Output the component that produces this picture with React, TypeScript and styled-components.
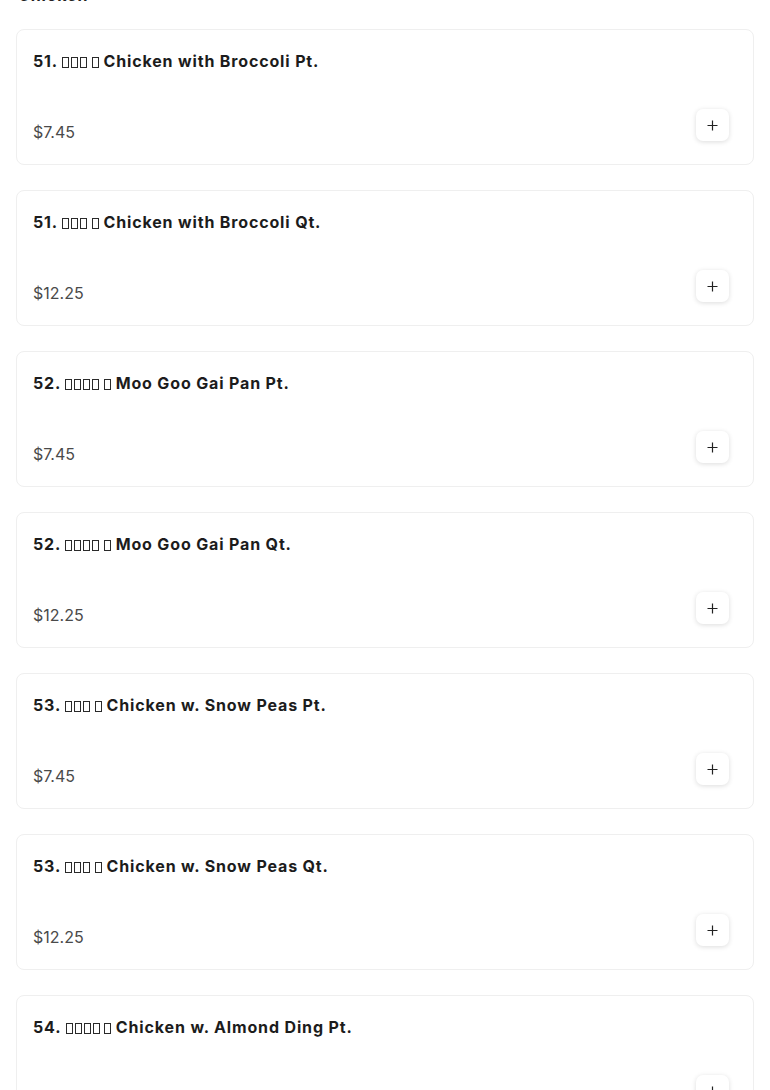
import styled, { createGlobalStyle } from "styled-components";

const GlobalStyle = createGlobalStyle`
  body {
    margin: 0;
    background: #ffffff;
    font-family: "Inter", "Noto Sans", "DejaVu Sans", sans-serif;
    color: #1a1a1a;
  }
`;

const Page = styled.div`
  padding: 0 16px;
  overflow: hidden;
  height: 1090px;
`;

const SectionTitle = styled.h2`
  margin: -15px 0 0 2px;
  font-size: 16px;
  line-height: 20px;
  font-weight: 700;
  letter-spacing: 0.9px;
  color: #222;
`;

const ItemList = styled.ul`
  list-style: none;
  margin: 24px 0 0;
  padding: 0;
  display: flex;
  flex-direction: column;
  gap: 25px;
`;

const Item = styled.li`
  height: 136px;
  box-sizing: border-box;
  border: 1px solid #efefef;
  border-radius: 8px;
  padding: 20px 24px 22px 16px;
  display: flex;
  flex-direction: column;
  justify-content: space-between;
`;

const ItemName = styled.h3`
  margin: 0;
  font-size: 16px;
  line-height: 22px;
  font-weight: 700;
  letter-spacing: 0.85px;
  color: #1c1c1c;
`;

/* missing-glyph boxes, as the menu shows them */
const Glyphs = styled.span`
  display: inline-flex;
  gap: 2px;
  vertical-align: -1px;
`;

const Box = styled.span`
  display: inline-block;
  width: 5px;
  height: 9px;
  border: 1px solid #2a2a2a;
`;

const Bottom = styled.div`
  display: flex;
  align-items: center;
  justify-content: space-between;
`;

const Price = styled.span`
  font-size: 16px;
  line-height: 20px;
  color: #4a4a4a;
  margin-top: 14px;
`;

const AddButton = styled.button`
  width: 33px;
  height: 32px;
  border: none;
  border-radius: 7px;
  background: #ffffff;
  box-shadow: 0 1px 5px rgba(0, 0, 0, 0.14);
  display: flex;
  align-items: center;
  justify-content: center;
  padding: 0;
  cursor: pointer;
`;

const PlusIcon = () => (
  <svg width="11" height="11" viewBox="0 0 11 11" fill="none">
    <path d="M5.5 0.5v10M0.5 5.5h10" stroke="#222" strokeWidth="1.2" />
  </svg>
);

interface IItem {
  num: number;
  boxes: number;
  name: string;
  size: string;
  price: string;
}

const items: IItem[] = [
  { num: 51, boxes: 3, name: "Chicken with Broccoli", size: "Pt.", price: "$7.45" },
  { num: 51, boxes: 3, name: "Chicken with Broccoli", size: "Qt.", price: "$12.25" },
  { num: 52, boxes: 4, name: "Moo Goo Gai Pan", size: "Pt.", price: "$7.45" },
  { num: 52, boxes: 4, name: "Moo Goo Gai Pan", size: "Qt.", price: "$12.25" },
  { num: 53, boxes: 3, name: "Chicken w. Snow Peas", size: "Pt.", price: "$7.45" },
  { num: 53, boxes: 3, name: "Chicken w. Snow Peas", size: "Qt.", price: "$12.25" },
  { num: 54, boxes: 4, name: "Chicken w. Almond Ding", size: "Pt.", price: "$7.45" },
];

const Missing = ({ count }: { count: number }) => (
  <Glyphs>
    {Array.from({ length: count }).map((_, i) => (
      <Box key={i} />
    ))}
  </Glyphs>
);

function App() {
  return (
    <Page>
      <GlobalStyle />
      <SectionTitle>Chicken</SectionTitle>
      <ItemList>
        {items.map((item, i) => (
          <Item key={i}>
            <ItemName>
              {item.num}. <Missing count={item.boxes} /> <Missing count={1} /> {item.name} {item.size}
            </ItemName>
            <Bottom>
              <Price>{item.price}</Price>
              <AddButton aria-label="Add">
                <PlusIcon />
              </AddButton>
            </Bottom>
          </Item>
        ))}
      </ItemList>
    </Page>
  );
}

export default App;
